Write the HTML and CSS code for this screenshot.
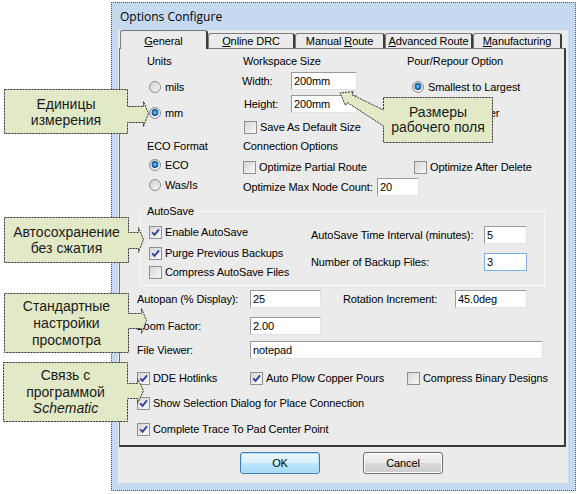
FILE: index.html
```html
<!DOCTYPE html>
<html>
<head>
<meta charset="utf-8">
<title>Options Configure</title>
<link rel="stylesheet" href="styles.css">
</head>
<body>
<div class="page">
  <div class="dialog">
    <div class="title">Options Configure</div>
    <div class="client">
      <div class="tabs">
        <div class="tab sel t1"><u>G</u>eneral</div>
        <div class="tab t2"><u>O</u>nline DRC</div>
        <div class="tab t3">Manual <u>R</u>oute</div>
        <div class="tab t4"><u>A</u>dvanced Route</div>
        <div class="tab t5"><u>M</u>anufacturing</div>
      </div>
      <div class="panel">
        <div class="sec1">
          <div class="col c-units">
            <div class="legend">Units</div>
            <div class="opt mt12 ml2"><span class="radio"></span>mils</div>
            <div class="opt mt12 ml2"><span class="radio on"></span>mm</div>
          </div>
          <div class="col c-ws">
            <div class="legend ml1">Workspace Size</div>
            <div class="frow mt4"><span class="lbl w49">Width:</span><span class="inp w66">200mm</span></div>
            <div class="frow mt5"><span class="lbl w49 ind2">Height:</span><span class="inp w66">200mm</span></div>
            <div class="opt mt7 ml2"><span class="chk"></span>Save As Default Size</div>
          </div>
          <div class="col c-pour">
            <div class="legend">Pour/Repour Option</div>
            <div class="opt mt12 ml5"><span class="radio on"></span>Smallest to Largest</div>
            <div class="opt mt12 ml5"><span class="radio"></span>Creation Order</div>
          </div>
        </div>
        <div class="sec2">
          <div class="col c-units">
            <div class="legend">ECO Format</div>
            <div class="opt mt5 ml2"><span class="radio on"></span>ECO</div>
            <div class="opt mt6 ml2"><span class="radio"></span>Was/Is</div>
          </div>
          <div class="col c-conn">
            <div class="legend">Connection Options</div>
            <div class="crow mt7">
              <div class="opt w171"><span class="chk"></span>Optimize Partial Route</div>
              <div class="opt"><span class="chk"></span>Optimize After Delete</div>
            </div>
            <div class="frow mt4"><span class="lbl w134">Optimize Max Node Count:</span><span class="inp w42">20</span></div>
          </div>
        </div>
        <fieldset class="autosave">
          <legend>AutoSave</legend>
          <div class="as-body">
            <div class="as-left">
              <div class="opt mt7"><span class="chk on"><svg viewBox="0 0 11 11" width="11" height="11"><path d="M2.2 5.4 L4.5 7.9 L9 2.4" fill="none" stroke="#2b3f96" stroke-width="1.8"/></svg></span>Enable AutoSave</div>
              <div class="opt mt7"><span class="chk on"><svg viewBox="0 0 11 11" width="11" height="11"><path d="M2.2 5.4 L4.5 7.9 L9 2.4" fill="none" stroke="#2b3f96" stroke-width="1.8"/></svg></span>Purge Previous Backups</div>
              <div class="opt mt5"><span class="chk"></span>Compress AutoSave Files</div>
            </div>
            <div class="as-right">
              <div class="frow mt8"><span class="lbl w173">AutoSave Time Interval (minutes):</span><span class="inp w43">5</span></div>
              <div class="frow mt9"><span class="lbl w173">Number of Backup Files:</span><span class="inp w43 focus">3</span></div>
            </div>
          </div>
        </fieldset>
        <div class="sec4">
          <div class="frow mt4"><span class="lbl w113">Autopan (% Display):</span><span class="inp w71">25</span><span class="lbl w112 ml22">Rotation Increment:</span><span class="inp w72">45.0deg</span></div>
          <div class="frow mt9"><span class="lbl w113">Zoom Factor:</span><span class="inp w71">2.00</span></div>
          <div class="frow mt6"><span class="lbl w113">File Viewer:</span><span class="inp w293">notepad</span></div>
          <div class="crow mt12">
            <div class="opt w113"><span class="chk on"><svg viewBox="0 0 11 11" width="11" height="11"><path d="M2.2 5.4 L4.5 7.9 L9 2.4" fill="none" stroke="#2b3f96" stroke-width="1.8"/></svg></span>DDE Hotlinks</div>
            <div class="opt w157"><span class="chk on"><svg viewBox="0 0 11 11" width="11" height="11"><path d="M2.2 5.4 L4.5 7.9 L9 2.4" fill="none" stroke="#2b3f96" stroke-width="1.8"/></svg></span>Auto Plow Copper Pours</div>
            <div class="opt"><span class="chk"></span>Compress Binary Designs</div>
          </div>
          <div class="opt mt11"><span class="chk on"><svg viewBox="0 0 11 11" width="11" height="11"><path d="M2.2 5.4 L4.5 7.9 L9 2.4" fill="none" stroke="#2b3f96" stroke-width="1.8"/></svg></span>Show Selection Dialog for Place Connection</div>
          <div class="opt mt12"><span class="chk on"><svg viewBox="0 0 11 11" width="11" height="11"><path d="M2.2 5.4 L4.5 7.9 L9 2.4" fill="none" stroke="#2b3f96" stroke-width="1.8"/></svg></span>Complete Trace To Pad Center Point</div>
        </div>
      </div>
      <div class="buttons">
        <div class="btn ok">OK</div>
        <div class="btn">Cancel</div>
      </div>
    </div>
  </div>

  <div class="callout co1">
    <svg class="shape" width="148" height="49" viewBox="0 0 148 49"><path d="M1.5 1.5 H124.5 V18.5 H140.5 V13.5 L145.5 25.5 L140.5 38.5 V34.5 H124.5 V45.5 H1.5 Z"/></svg>
    <div class="ctext w124 h45"><span>Единицы<br>измерения</span></div>
  </div>
  <div class="callout co2">
    <svg class="shape" width="156" height="55" viewBox="0 0 156 55"><path d="M45.5 8.5 H154.5 V53.5 H45.5 V37 L9.2 13.4 L7.5 16.4 L2 4 L15.5 2.6 L13.8 5.6 L45.5 21 Z"/></svg>
    <div class="ctext w110 h46 lh15"><span>Размеры<br>рабочего поля</span></div>
  </div>
  <div class="callout co3">
    <svg class="shape" width="142" height="48" viewBox="0 0 142 48"><path d="M1.5 1.5 H125.5 V16.5 H135.5 V11.5 L140.5 23.5 L135.5 36.5 V32.5 H125.5 V46.5 H1.5 Z"/></svg>
    <div class="ctext w125 h46"><span>Автосохранение<br>без сжатия</span></div>
  </div>
  <div class="callout co4">
    <svg class="shape" width="146" height="62" viewBox="0 0 146 62"><path d="M1.5 1.5 H125.5 V21.5 H138.5 V16.5 L143.5 28.5 L138.5 41.5 V36.5 H125.5 V60.5 H1.5 Z"/></svg>
    <div class="ctext w125 h60 lh17"><span>Стандартные<br>настройки<br>просмотра</span></div>
  </div>
  <div class="callout co5">
    <svg class="shape" width="144" height="62" viewBox="0 0 144 62"><path d="M1.5 1.5 H125.5 V22.5 H135.5 V17.5 L141.5 29.5 L135.5 42.5 V37.5 H125.5 V60.5 H1.5 Z"/></svg>
    <div class="ctext w125 h60 lh16"><span>Связь с<br>программой<br><i>Schematic</i></span></div>
  </div>
</div>
</body>
</html>
```

FILE: styles.css
```css
* { box-sizing: border-box; }
html, body { margin: 0; padding: 0; background: #ffffff; }
body {
  font-family: "Liberation Sans", Arial, sans-serif;
  font-size: 11px;
  letter-spacing: -0.1px;
  color: #000;
}
.page {
  position: relative;
  width: 580px;
  height: 494px;
  overflow: hidden;
  padding: 2px 0 0 111px;
}
.dialog {
  width: 465px;
  height: 489px;
  border: 1px dotted #555;
  background: #c5d9f0;
  padding: 0 7px 7px 6px;
  display: flex;
  flex-direction: column;
}
.title {
  height: 27px;
  line-height: 27px;
  padding-left: 2px;
  font-family: "Open Sans", "Liberation Sans", sans-serif;
  font-size: 12px;
  letter-spacing: 0;
  color: #000;
}
.client {
  height: 453px;
  background: #ebebeb;
  padding: 0 2px 0 1px;
  display: flex;
  flex-direction: column;
}
.tabs {
  height: 18px;
  display: flex;
  align-items: flex-end;
  margin-left: 1px;
}
.tab {
  height: 15px;
  border: 1px solid #7c7c7c;
  border-bottom: none;
  border-right: 2px solid #3c3c3c;
  border-radius: 3px 3px 0 0;
  text-align: center;
  line-height: 14px;
  white-space: nowrap;
  background: #ebebeb;
}
.tab.sel {
  height: 19px;
  margin-bottom: -1px;
  padding-top: 3px;
  position: relative;
  z-index: 1;
}
.t1 { width: 88px; }
.t2 { width: 87px; }
.t3 { width: 90px; }
.t4 { width: 88px; }
.t5 { width: 89px; }

.panel {
  height: 399px;
  border-left: 1px solid #6e6e6e;
  border-top: 1px solid #7c7c7c;
  border-right: 2px solid #3a3a3a;
  border-bottom: 2px solid #3a3a3a;
  padding-top: 5px;
}
.sec1 { display: flex; margin-left: 20px; height: 85px; }
.sec2 { display: flex; margin-left: 20px; height: 65px; }
.col { display: flex; flex-direction: column; }
.c-units { width: 99px; padding-left: 7px; }
.c-ws { width: 161px; padding-left: 3px; }
.c-pour { padding-left: 7px; }
.c-conn { padding-left: 4px; }
.legend { height: 14px; line-height: 14px; white-space: nowrap; }

.opt {
  display: flex;
  align-items: center;
  height: 14px;
  white-space: nowrap;
}
.crow { display: flex; }
.frow { display: flex; align-items: center; height: 18px; white-space: nowrap; }
.lbl { display: block; }

.radio {
  display: inline-block;
  width: 12px;
  height: 12px;
  border-radius: 50%;
  border: 1px solid #8d8d8d;
  background: linear-gradient(135deg, #cfcfcf, #f7f7f7);
  margin-right: 4px;
  flex: none;
}
.radio.on {
  background:
    radial-gradient(circle at 50% 45%, #9fdcff 0, #2d8ad8 1.6px, #13508f 3.2px, rgba(0,0,0,0) 3.7px),
    linear-gradient(135deg, #cfcfcf, #f7f7f7);
}
.chk {
  display: inline-flex;
  width: 13px;
  height: 13px;
  border: 1px solid #909090;
  background: linear-gradient(135deg, #d6d6d6, #f8f8f8);
  margin-right: 3px;
  flex: none;
}
.chk svg { display: block; }

.inp {
  display: block;
  height: 18px;
  line-height: 16px;
  background: #fff;
  border-top: 1px solid #9a9a9a;
  border-left: 1px solid #9a9a9a;
  border-right: 1px solid #e2e2e2;
  border-bottom: 1px solid #e2e2e2;
  padding-left: 2px;
  flex: none;
}
.inp.focus { border: 1px solid #7aaedf; }

.autosave {
  margin: 0 0 0 20px;
  width: 405px;
  height: 82px;
  padding: 0;
  border: 1px solid #fafafa;
  min-width: 0;
}
.autosave legend {
  margin-left: 5px;
  padding: 0 1px;
  line-height: 14px;
  height: 14px;
}
.as-body { display: flex; }
.as-left { width: 170px; padding-left: 8px; display: flex; flex-direction: column; }
.as-right { display: flex; flex-direction: column; }
.sec4 { margin-left: 17px; display: flex; flex-direction: column; }

.buttons {
  display: flex;
  gap: 43px;
  padding: 5px 0 0 121px;
}
.btn {
  width: 80px;
  height: 22px;
  border: 1px solid #707070;
  border-radius: 3px;
  background: linear-gradient(#f4f4f4 0%, #e8e8e8 50%, #d8d8d8 51%, #cdcdcd 100%);
  text-align: center;
  line-height: 20px;
  box-shadow: inset 0 0 0 1px #fbfbfb;
}
.btn.ok {
  border-color: #3c7fb1;
  background: linear-gradient(#eaf6fd 0%, #d9f0fc 50%, #bee6fd 51%, #a7d9f5 100%);
  box-shadow: inset 0 0 0 1px #b5e2fa;
}

.mt4 { margin-top: 4px; }
.mt5 { margin-top: 5px; }
.mt6 { margin-top: 6px; }
.mt7 { margin-top: 7px; }
.mt8 { margin-top: 8px; }
.mt9 { margin-top: 9px; }
.mt11 { margin-top: 11px; }
.mt12 { margin-top: 12px; }
.ml1 { margin-left: 1px; }
.ml2 { margin-left: 2px; }
.ml5 { margin-left: 5px; }
.ml22 { margin-left: 22px; }
.ind2 { padding-left: 2px; }
.w42 { width: 42px; }
.w43 { width: 43px; }
.w49 { width: 49px; }
.w66 { width: 66px; }
.w71 { width: 71px; }
.w72 { width: 72px; }
.w112 { width: 112px; }
.w113 { width: 113px; }
.w134 { width: 134px; }
.w157 { width: 157px; }
.w171 { width: 171px; }
.w173 { width: 173px; }
.w293 { width: 293px; }

/* Callouts overlaying the dialog */
.callout { position: absolute; z-index: 5; }
.callout .shape { position: absolute; left: 0; top: 0; }
.callout .shape path {
  fill: #e2e9c6;
  stroke: #2e2e2e;
  stroke-width: 1;
  stroke-dasharray: 2 1;
}
.ctext {
  position: relative;
  display: flex;
  align-items: center;
  justify-content: center;
  text-align: center;
  font-family: "Liberation Sans", Arial, sans-serif;
  font-size: 14px;
  letter-spacing: 0;
  line-height: 16px;
  color: #1b1b1b;
}
.ctext.w124 { width: 124px; }
.ctext.w125 { width: 125px; }
.ctext.w110 { width: 110px; }
.ctext.h45 { height: 45px; }
.ctext.h46 { height: 46px; }
.ctext.h60 { height: 60px; }
.ctext.lh15 { line-height: 15px; }
.ctext.lh16 { line-height: 16.5px; }
.ctext.lh17 { line-height: 17px; }
.co1 { left: 3px; top: 88px; width: 148px; height: 49px; padding: 1px 0 0 1px; }
.co2 { left: 338px; top: 89px; width: 156px; height: 55px; padding: 8px 0 0 45px; }
.co3 { left: 3px; top: 216px; width: 142px; height: 48px; padding: 1px 0 0 1px; }
.co4 { left: 3px; top: 292px; width: 146px; height: 62px; padding: 1px 0 0 1px; }
.co5 { left: 2px; top: 361px; width: 144px; height: 62px; padding: 1px 0 0 1px; }
```
